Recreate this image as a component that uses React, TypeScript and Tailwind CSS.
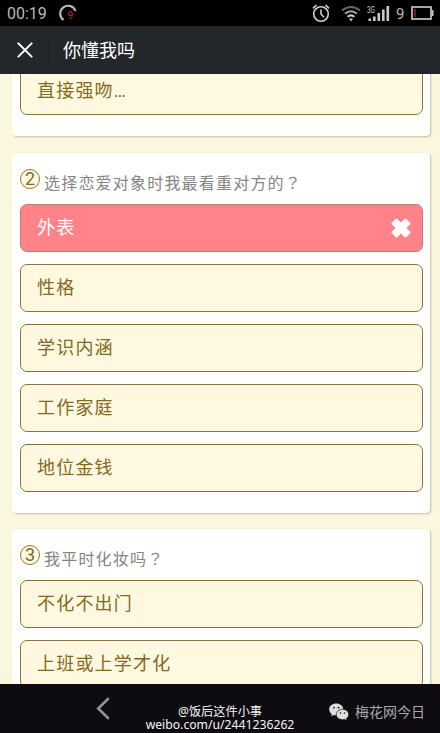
import { clsx } from "clsx";

type Question = {
  no?: number;
  title?: string;
  options: string[];
  wrong?: number;
};

const questions: Question[] = [
  { options: ["直接强吻…"] },
  {
    no: 2,
    title: "选择恋爱对象时我最看重对方的？",
    options: ["外表", "性格", "学识内涵", "工作家庭", "地位金钱"],
    wrong: 0,
  },
  { no: 3, title: "我平时化妆吗？", options: ["不化不出门", "上班或上学才化"] },
];

function StatusBar() {
  return (
    <div className="flex h-[26px] shrink-0 items-center bg-black text-[#b9b9b9]">
      <span className="ml-[7px] w-[40px] pt-[2px] font-['Roboto',sans-serif] text-[16px] leading-[24px] whitespace-nowrap">
        00:19
      </span>
      <svg className="ml-[11px]" width="20" height="20" viewBox="0 0 20 20" fill="none">
        <path d="M5.5 16.9A7.8 7.8 0 1 1 17.4 8" stroke="#bcbcbc" strokeWidth="2.1" />
        <text x="9.5" y="15.5" fontSize="10" fontFamily="Roboto, sans-serif" fill="#c8202a">
          9
        </text>
      </svg>
      <div className="ml-auto flex items-center pr-[6px]">
        {/* alarm */}
        <svg width="18" height="19" viewBox="0 0 18 19" fill="none" stroke="#cfcfcf" strokeWidth="1.6">
          <circle cx="9" cy="10" r="7.3" />
          <path d="M9 5.5V10l3 3.3M1 4.4 4.4 1.2M17 4.4 13.6 1.2" />
        </svg>
        {/* wifi */}
        <svg className="ml-[11px]" width="20" height="17" viewBox="0 0 20 17" fill="none" strokeWidth="2">
          <path d="M1 5.5Q10-1.5 19 5.5" stroke="#686868" />
          <path d="M4 8.7Q10 3.8 16 8.7" stroke="#a8a8a8" />
          <path d="M6.6 11.8Q10 9 13.4 11.8" stroke="#cfcfcf" />
          <path d="M8 13.6h4L10 16.4Z" fill="#cfcfcf" />
        </svg>
        {/* 3G signal */}
        <svg className="ml-[6px]" width="23" height="17" viewBox="0 0 23 17" fill="#c9c9c9">
          <text x="0" y="7.5" fontSize="9" textLength="8" lengthAdjust="spacingAndGlyphs" fontFamily="Roboto, sans-serif">
            3G
          </text>
          <rect x="1.5" y="13.5" width="2.6" height="2.5" />
          <rect x="6" y="11.5" width="2.6" height="4.5" />
          <rect x="10.5" y="8" width="2.6" height="8" />
          <rect x="15" y="4.5" width="2.6" height="11.5" />
          <rect x="19.5" y="1" width="2.6" height="15" />
        </svg>
        <span className="ml-[6px] w-[9px] pt-[2px] font-['Roboto',sans-serif] text-[15px] leading-[24px]">9</span>
        {/* battery */}
        <svg className="ml-[6px]" width="23" height="14" viewBox="0 0 23 14" fill="none">
          <rect x="1" y="1" width="19" height="12" stroke="#c4c4c4" strokeWidth="1.7" />
          <rect x="20.5" y="4" width="2" height="6" fill="#c4c4c4" />
          <rect x="3" y="3" width="1.6" height="8" fill="#8d2525" />
        </svg>
      </div>
    </div>
  );
}

function TitleBar() {
  return (
    <header className="flex h-12 shrink-0 items-center bg-[#23272a]">
      <button className="flex h-7 w-[50px] items-center justify-center border-r border-[#191c1f]" aria-label="关闭">
        <svg width="16" height="16" viewBox="0 0 16 16" stroke="#fff" strokeWidth="2" strokeLinecap="round">
          <path d="M1.4 1.4 14.6 14.6M14.6 1.4 1.4 14.6" />
        </svg>
      </button>
      <h1 className="ml-[13px] pb-[2px] text-[18px] leading-6 text-white">你懂我吗</h1>
    </header>
  );
}

function Option({ label, wrong }: { label: string; wrong: boolean }) {
  return (
    <li
      className={clsx(
        "flex h-12 items-center justify-between rounded-[7px] border pr-[11px] pl-4 text-[18px] tracking-[1.2px]",
        wrong ? "border-[#b97f76] bg-[#ff8389] text-white" : "border-[#8b7444] bg-[#fdf8df] text-[#846921]",
      )}
    >
      {/* Roboto first keeps the ellipsis on the baseline */}
      <span className="pb-px font-['Roboto','Noto_Sans_CJK_SC',sans-serif]">{label}</span>
      {wrong && (
        <svg width="20" height="20" viewBox="0 0 20 20" fill="#fff" stroke="#fff" strokeWidth="2" strokeLinejoin="round">
          <path d="M5.5 1.500 10 6l4.500-4.500 4 4L14 10l4.500 4.500-4 4L10 14l-4.500 4.500-4-4L6 10 1.500 5.500Z" />
        </svg>
      )}
    </li>
  );
}

function QuestionCard({ no, title, options, wrong }: Question) {
  return (
    <section className="rounded-[4px] bg-[#fffffd] pr-[7px] pb-[21px] pl-2 shadow-[1px_1px_2px_rgba(110,110,80,0.4)]">
      {title && (
        <div className="flex h-[51px] items-start pt-4">
          <span className="flex size-5 items-center justify-center rounded-full border border-[#8b7434] bg-[#fdfae4] font-['Roboto',sans-serif] text-[18px] leading-none text-[#846921]">
            {no}
          </span>
          {/* the TC face centres the full-width question mark */}
          <h2 className="ml-1 text-[16px] leading-[26px] tracking-[1.2px] text-[#858585]">
            {title.slice(0, -1)}
            <span className="font-['Noto_Sans_CJK_TC',sans-serif]">{title.slice(-1)}</span>
          </h2>
        </div>
      )}
      <ul className="flex flex-col gap-3">
        {options.map((label, i) => (
          <Option key={label} label={label} wrong={i === wrong} />
        ))}
      </ul>
    </section>
  );
}

function WechatLogo() {
  return (
    <svg width="20" height="18" viewBox="0 0 20 18" fill="#dedede">
      <path d="M7.2.5C3.3.5.2 3.1.2 6.4c0 1.900 1 3.500 2.600 4.600l-.7 2.300 2.700-1.400c.8.2 1.600.4 2.400.4 3.900 0 7-2.600 7-5.900S11.100.5 7.200.5Z" />
      <path
        d="M13.500 6.300c-3.500 0-6.200 2.300-6.200 5.200s2.700 5.200 6.200 5.200c.7 0 1.400-.1 2.100-.3l2.400 1.200-.6-2c1.400-.9 2.300-2.400 2.300-4.100 0-2.900-2.700-5.200-6.200-5.200Z"
        stroke="#0e0c10"
        strokeWidth="0.7"
      />
      <g fill="#0e0c10">
        <circle cx="4.900" cy="4.600" r="0.900" />
        <circle cx="9.500" cy="4.600" r="0.900" />
        <circle cx="11.500" cy="9.900" r="0.750" />
        <circle cx="15.500" cy="9.900" r="0.750" />
      </g>
    </svg>
  );
}

function BottomBar() {
  return (
    <footer className="flex h-[49px] shrink-0 items-start bg-[#0e0c10]">
      <svg className="mt-[13px] ml-[96px]" width="14" height="23" viewBox="0 0 14 23" fill="none">
        <path d="M12 2 2.2 11.5 12 21" stroke="#949296" strokeWidth="2.6" strokeLinecap="round" />
      </svg>
      <p className="mt-[21px] ml-[35px] w-[150px] text-center font-['Noto_Sans','Noto_Sans_CJK_SC',sans-serif] text-[12.2px] leading-[13px] whitespace-nowrap text-[#f4f4f4]">
        @饭后这件小事
        <br />
        weibo.com/u/2441236262
      </p>
      <div className="mt-[18px] ml-[34px] flex items-center gap-[6px] text-[14px] leading-[18px] whitespace-nowrap text-[#a9a8aa]">
        <WechatLogo />
        <span className="pb-[2px]">梅花网今日</span>
      </div>
    </footer>
  );
}

export default function App() {
  return (
    <div className="flex h-[733px] w-[440px] flex-col overflow-hidden bg-[#faf7de] font-['Noto_Sans_CJK_SC',sans-serif]">
      <StatusBar />
      <TitleBar />
      <main className="min-h-0 flex-1 overflow-hidden pr-[10px] pl-3">
        {/* scrolled part of the quiz */}
        <div className="-mt-[7px] flex flex-col gap-[16.7px]">
          {questions.map((q) => (
            <QuestionCard key={q.options[0]} {...q} />
          ))}
        </div>
      </main>
      <BottomBar />
    </div>
  );
}
